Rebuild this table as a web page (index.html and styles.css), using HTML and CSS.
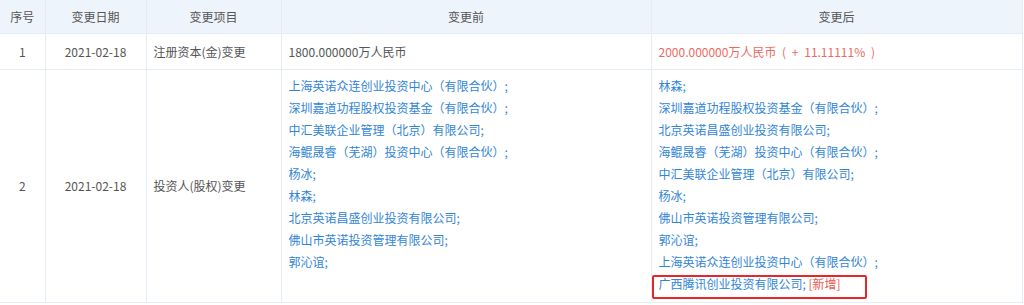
FILE: index.html
```html
<!DOCTYPE html>
<html lang="zh-CN">
<head>
<meta charset="utf-8">
<title>变更记录</title>
<link rel="stylesheet" href="styles.css">
</head>
<body>
<table class="changes">
  <colgroup>
    <col class="c-no">
    <col class="c-date">
    <col class="c-item">
    <col class="c-before">
    <col class="c-after">
  </colgroup>
  <thead>
    <tr>
      <th>序号</th>
      <th>变更日期</th>
      <th>变更项目</th>
      <th>变更前</th>
      <th>变更后</th>
    </tr>
  </thead>
  <tbody>
    <tr class="row-short">
      <td class="center">1</td>
      <td class="center">2021-02-18</td>
      <td>注册资本(金)变更</td>
      <td>1800.000000万人民币</td>
      <td class="red">2000.000000万人民币 ( + 11.11111% )</td>
    </tr>
    <tr>
      <td class="center">2</td>
      <td class="center">2021-02-18</td>
      <td>投资人(股权)变更</td>
      <td class="list">
        <div class="entry"><a>上海英诺众连创业投资中心（有限合伙）;</a></div>
        <div class="entry"><a>深圳嘉道功程股权投资基金（有限合伙）;</a></div>
        <div class="entry"><a>中汇美联企业管理（北京）有限公司;</a></div>
        <div class="entry"><a>海鲲晟睿（芜湖）投资中心（有限合伙）;</a></div>
        <div class="entry"><a>杨冰;</a></div>
        <div class="entry"><a>林森;</a></div>
        <div class="entry"><a>北京英诺昌盛创业投资有限公司;</a></div>
        <div class="entry"><a>佛山市英诺投资管理有限公司;</a></div>
        <div class="entry"><a>郭沁谊;</a></div>
      </td>
      <td class="list">
        <div class="entry"><a>林森;</a></div>
        <div class="entry"><a>深圳嘉道功程股权投资基金（有限合伙）;</a></div>
        <div class="entry"><a>北京英诺昌盛创业投资有限公司;</a></div>
        <div class="entry"><a>海鲲晟睿（芜湖）投资中心（有限合伙）;</a></div>
        <div class="entry"><a>中汇美联企业管理（北京）有限公司;</a></div>
        <div class="entry"><a>杨冰;</a></div>
        <div class="entry"><a>佛山市英诺投资管理有限公司;</a></div>
        <div class="entry"><a>郭沁谊;</a></div>
        <div class="entry"><a>上海英诺众连创业投资中心（有限合伙）;</a></div>
        <div class="entry"><span class="marked"><a>广西腾讯创业投资有限公司;</a> <span class="new">[新增]</span></span></div>
      </td>
    </tr>
  </tbody>
</table>
</body>
</html>
```

FILE: styles.css
```css
html, body {
  margin: 0;
  padding: 0;
  background: #ffffff;
}

body {
  font-family: "Noto Sans CJK SC", "Noto Sans", sans-serif;
  font-size: 12px;
  color: #555555;
}

.changes {
  border-collapse: collapse;
  table-layout: fixed;
  width: 1022px;
}

.c-no { width: 45px; }
.c-date { width: 101px; }
.c-item { width: 135px; }
.c-before { width: 370px; }
.c-after { width: 371px; }

.changes th,
.changes td {
  border: 1px solid #e6ecf3;
  padding: 0 7px;
  text-align: left;
  vertical-align: middle;
  line-height: 22px;
}

.changes tr > :first-child {
  border-left: none;
}

.changes th {
  background: #eef4fb;
  font-weight: normal;
  color: #555555;
  text-align: center;
  height: 33px;
  border-top: none;
}

.row-short td {
  height: 35px;
}

.changes td.center {
  text-align: center;
  padding: 0;
}

.changes td.red {
  color: #ec6a62;
  word-spacing: 3px;
}

.changes td.list {
  padding: 5px 7px 7px;
  vertical-align: top;
}

.entry a {
  color: #3185d6;
  text-decoration: none;
}

.marked {
  position: relative;
  display: inline-block;
}

.marked::after {
  content: "";
  position: absolute;
  left: -7px;
  right: -26px;
  top: 2px;
  bottom: -4px;
  border: 2px solid #e6262b;
  border-radius: 2px;
}

.new {
  color: #e85a4f;
}
```
